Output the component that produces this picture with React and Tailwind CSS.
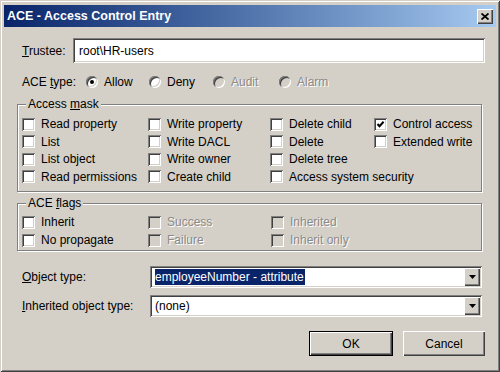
const sunken =
  'shadow-[inset_1px_1px_0_#808080,inset_-1px_-1px_0_#ffffff,inset_2px_2px_0_#404040,inset_-2px_-2px_0_#d4d0c8]';
const raised =
  'shadow-[inset_1px_1px_0_#ffffff,inset_-1px_-1px_0_#404040,inset_-2px_-2px_0_#808080]';
const etched = 'border border-[#808080] shadow-[inset_1px_1px_0_#ffffff,1px_1px_0_#ffffff]';
const greyText = 'text-[#8a8a8a] [text-shadow:1px_1px_0_#ffffff]';

const Check = ({ label, checked, disabled }) => (
  <div className="flex items-center h-[17px]">
    <span
      className={`w-[13px] h-[13px] shrink-0 flex items-center justify-center ${sunken} ${
        disabled ? 'bg-[#d4d0c8]' : 'bg-white'
      }`}
    >
      {checked && (
        <svg width="13" height="13" viewBox="0 0 13 13">
          <path d="M3.5 6 L5.5 8.2 L9.6 3.8" stroke="#000" strokeWidth="2" fill="none" />
        </svg>
      )}
    </span>
    <span className={`ml-[6px] whitespace-nowrap ${disabled ? greyText : ''}`}>{label}</span>
  </div>
);

const Radio = ({ label, checked, disabled, w }) => (
  <div className={`flex items-center ${w}`}>
    <span
      className={`w-[12px] h-[12px] rounded-full shrink-0 flex items-center justify-center ${sunken} ${
        disabled ? 'bg-[#d4d0c8]' : 'bg-white'
      }`}
    >
      {checked && <span className="w-[4px] h-[4px] rounded-full bg-black" />}
    </span>
    <span className={`ml-[6px] ${disabled ? greyText : ''}`}>{label}</span>
  </div>
);

const Group = ({ title, mnemonic, rest, className, children }) => (
  <div className={`relative mr-[3px] ${etched} ${className}`}>
    <span className="absolute -top-[8px] left-[8px] bg-[#d4d0c8] px-[2px] leading-[14px]">
      {title}
      <span className="underline">{mnemonic}</span>
      {rest}
    </span>
    {children}
  </div>
);

const Combo = ({ children }) => (
  <div className={`flex-1 h-[22px] bg-white flex items-center pl-[5px] pr-[2px] ${sunken}`}>
    <div className="flex-1 flex items-center">{children}</div>
    <div className={`w-[16px] h-[18px] bg-[#d4d0c8] flex items-center justify-center ${raised}`}>
      <svg width="7" height="4" viewBox="0 0 7 4">
        <path d="M0 0 H7 L3.5 4 Z" fill="#000" />
      </svg>
    </div>
  </div>
);

export default function App() {
  return (
    <div className="w-[500px] h-[372px] bg-[#d4d0c8] p-[4px] flex flex-col font-['Liberation_Sans',Arial,sans-serif] text-[12px] text-black shadow-[inset_1px_1px_0_#d4d0c8,inset_-1px_-1px_0_#404040,inset_2px_2px_0_#ffffff,inset_-2px_-2px_0_#808080]">
      {/* title bar */}
      <div className="h-[22px] mt-[1px] flex items-center justify-between pl-[3px] pr-[3px] bg-gradient-to-r from-[#0a246a] to-[#a6caf0]">
        <span className="text-white font-bold text-[12.5px]">ACE - Access Control Entry</span>
        <div className={`w-[16px] h-[15px] bg-[#d4d0c8] flex items-center justify-center ${raised}`}>
          <svg width="8" height="7" viewBox="0 0 8 7">
            <path d="M0.5 0.5 L7.5 6.5 M7.5 0.5 L0.5 6.5" stroke="#000" strokeWidth="1.8" />
          </svg>
        </div>
      </div>

      <div className="flex flex-col pl-[13px] pr-[11px]">
        {/* trustee */}
        <div className="flex items-center mt-[11px] h-[25px]">
          <span className="w-[56px] pl-[5px]">
            <span className="underline">T</span>rustee:
          </span>
          <div className={`flex-1 h-[25px] bg-white flex items-center pl-[6px] ${sunken}`}>root\HR-users</div>
        </div>

        {/* ace type */}
        <div className="flex items-center mt-[11px] h-[16px]">
          <span className="w-[69px] pl-[5px]">
            ACE <span className="underline">t</span>ype:
          </span>
          <Radio label="Allow" checked w="w-[63px]" />
          <Radio label="Deny" w="w-[64px]" />
          <Radio label="Audit" disabled w="w-[66px]" />
          <Radio label="Alarm" disabled />
        </div>

        {/* access mask */}
        <Group title="Access " mnemonic="m" rest="ask" className="mt-[14px] h-[88px] pt-[10.5px] pl-[4px]">
          <div className="grid grid-cols-[126px_122px_104px_1fr] grid-rows-[17px_17px_17px_17px] grid-flow-col gap-y-[0.5px]">
            <Check label="Read property" />
            <Check label="List" />
            <Check label="List object" />
            <Check label="Read permissions" />
            <Check label="Write property" />
            <Check label="Write DACL" />
            <Check label="Write owner" />
            <Check label="Create child" />
            <Check label="Delete child" />
            <Check label="Delete" />
            <Check label="Delete tree" />
            <Check label="Access system security" />
            <Check label="Control access" checked />
            <Check label="Extended write" />
          </div>
        </Group>

        {/* ace flags */}
        <Group title="ACE " mnemonic="f" rest="lags" className="mt-[11px] h-[48px] pt-[9.5px] pl-[4px]">
          <div className="grid grid-cols-[126px_123px_1fr] grid-rows-[17px_17px] grid-flow-col gap-y-[1px]">
            <Check label="Inherit" />
            <Check label="No propagate" />
            <Check label="Success" disabled />
            <Check label="Failure" disabled />
            <Check label="Inherited" disabled />
            <Check label="Inherit only" disabled />
          </div>
        </Group>

        {/* object types */}
        <div className="flex items-center mt-[15px] mr-[3px]">
          <span className="w-[133px] pl-[5px]">
            <span className="underline">O</span>bject type:
          </span>
          <Combo>
            <span className="bg-[#0a246a] text-white leading-[16px] pr-[1px]">employeeNumber - attribute</span>
          </Combo>
        </div>
        <div className="flex items-center mt-[7px] mr-[3px]">
          <span className="w-[133px] pl-[5px]">
            <span className="underline">I</span>nherited object type:
          </span>
          <Combo>
            <span>(none)</span>
          </Combo>
        </div>

        {/* buttons */}
        <div className="flex justify-end gap-[10px] mt-[14px]">
          <div className="w-[84px] h-[25px] border border-black">
            <div className={`w-full h-full flex items-center justify-center bg-[#d4d0c8] ${raised}`}>OK</div>
          </div>
          <div className={`w-[82px] h-[25px] flex items-center justify-center bg-[#d4d0c8] ${raised}`}>Cancel</div>
        </div>
      </div>
    </div>
  );
}
